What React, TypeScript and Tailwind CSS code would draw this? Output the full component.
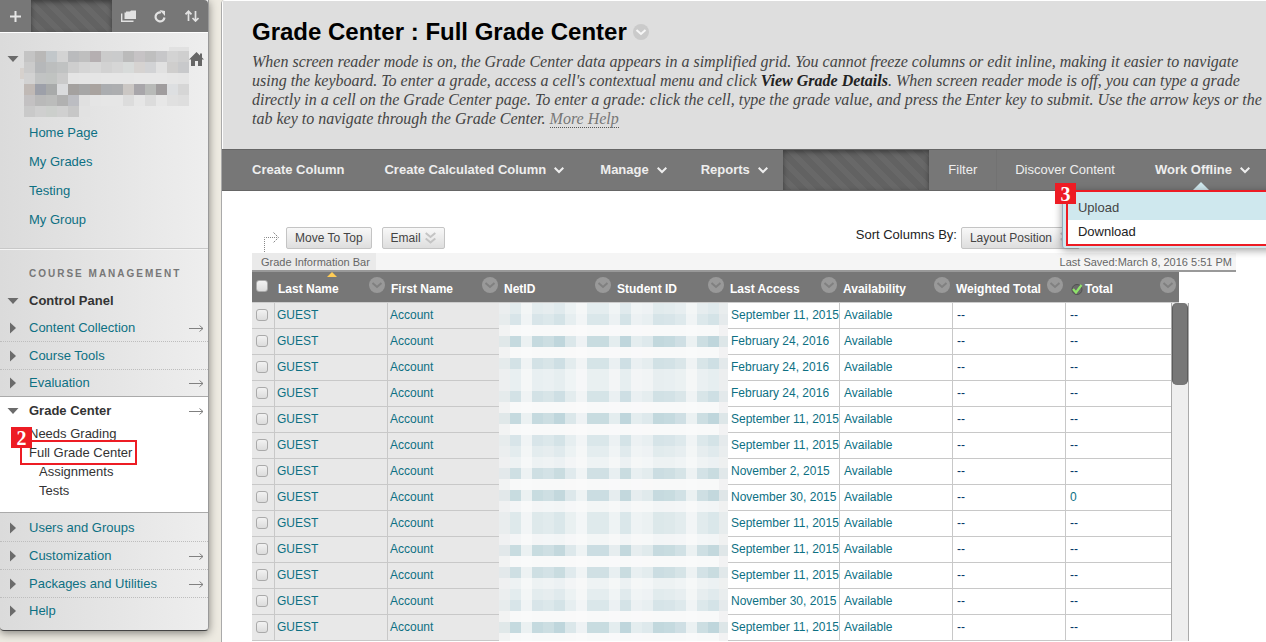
import React from 'react';

const links = ['Home Page', 'My Grades', 'Testing', 'My Group'];

const toolsTop = [
  { name: 'Content Collection', arrow: true },
  { name: 'Course Tools', arrow: false },
  { name: 'Evaluation', arrow: true },
];

const toolsBottom = [
  { name: 'Users and Groups', arrow: false },
  { name: 'Customization', arrow: true },
  { name: 'Packages and Utilities', arrow: true },
  { name: 'Help', arrow: false },
];

const columns = ['Last Name', 'First Name', 'NetID', 'Student ID', 'Last Access', 'Availability', 'Weighted Total', 'Total'];

const rows = [
  { date: 'September 11, 2015', total: '--' },
  { date: 'February 24, 2016', total: '--' },
  { date: 'February 24, 2016', total: '--' },
  { date: 'February 24, 2016', total: '--' },
  { date: 'September 11, 2015', total: '--' },
  { date: 'September 11, 2015', total: '--' },
  { date: 'November 2, 2015', total: '--' },
  { date: 'November 30, 2015', total: '0' },
  { date: 'September 11, 2015', total: '--' },
  { date: 'September 11, 2015', total: '--' },
  { date: 'September 11, 2015', total: '--' },
  { date: 'November 30, 2015', total: '--' },
  { date: 'September 11, 2015', total: '--' },
];

// censored course name
const courseMask = [
  'c4c4c4 b9b8b7 c2c7ca d3d3d3 babbbd bfbfbf b5afb1 cbcbcb cacbcc bbbbbb c6c3c5 bfbfbf c7c7c9 d3d3d3 cfcfcf',
  'cbcbcb b6b8ba bcbebe c0c2c2 cecece d5d5d5 d8d8d8 d2d2d2 d6d6d6 d8dbda d6d3d1 d2d3d5 e1e1e1 cfcecd c8c9cb',
  'd2d2d2 c1c3c3 c0c3c1 cacaca e4e4e4 e5e5e5 e5e5e5 e6e6e6 e6e6e6 e6e6e6 e7e7e7 e7e7e7 e7e7e7 e6e6e6 e5e5e5',
  'c0b9b5 9da0a9 a8aaaa dadbdd a4a19f a6a6a6 a9a39f abadb0 adaeb0 cbc7c4 a8a6aa b8bab8 a09d9e dddfe1 d6d6d6',
  'c3c1c2 b9b9b9 bbbcbb b1b1b1 bcbdc2 e0e0e0 e5e5e5 e6e6e6 e6e6e6 dcdcdc e6e6e6 dcdcdc e7e7e7 e0e0e0 dedede',
  'c9c9c9 cfcfcf cccfcc d0d0d0 c7c7c7 e2e2e2',
];

const idMask = [0.3, 0.85, 0.25, 0.85, 0.75, 0.95, 0.5, 0.2, 0.8, 0.8, 0.35, 0.95, 0.35, 0.45, 0.9, 0.85, 0.7, 0.25, 0.75, 0.95, 0.35];

const idMaskColor = (x: number, y: number) => {
  const top = y * 11;
  let covered = 0.4;
  for (let k = 0; k < 13; k++) {
    covered += Math.max(0, Math.min(top + 11, 17 + 26 * k) - Math.max(top, 7 + 26 * k));
  }
  const a = idMask[x] * Math.min(1, covered / 10);
  const base = x === 0 || x === 20 ? 243 : 250;
  return `rgb(${Math.round(base - 62 * a)}, ${Math.round(base - 38 * a)}, ${Math.round(base - 32 * a)})`;
};

const stripes = 'bg-[repeating-linear-gradient(45deg,#626262_0px,#626262_6px,#686868_6px,#686868_12px)] shadow-[inset_0_2px_5px_rgba(0,0,0,0.4)]';

const Caret = ({ open }: { open?: boolean }) => (
  <svg className="w-3 h-3 shrink-0" viewBox="0 0 12 12" fill="#6b6b6b">
    <path d={open ? 'M0.5 3h11L6 9z' : 'M3 0.5v11L9 6z'} />
  </svg>
);

const LongArrow = () => (
  <svg className="w-4 h-2 shrink-0" viewBox="0 0 16 8" fill="none" stroke="#808080">
    <path d="M1 4.5h14M11.5 1.5l3.5 3-3.5 3" />
  </svg>
);

const Chevron = () => (
  <svg className="w-[10px] h-2" viewBox="0 0 10 8" fill="none" stroke="#eee" strokeWidth="2">
    <path d="M0.7 1.7L5 6l4.3-4.3" />
  </svg>
);

const RoundChevron = ({ light }: { light?: boolean }) => (
  <svg className="w-4 h-4 block" viewBox="0 0 16 16" fill="none">
    <circle cx="8" cy="8" r="8" fill={light ? '#cacaca' : '#999'} />
    <path d="M3.5 6L8 10l4.5-4" stroke={light ? '#f6f6f6' : '#808080'} strokeWidth="2" />
  </svg>
);

const DoubleChevron = () => (
  <svg className="w-[11px] h-3" viewBox="0 0 11 12" fill="none" stroke="#c4c4c4" strokeWidth="2">
    <path d="M0.7 1l4.8 4 4.8-4M0.7 6.5l4.8 4 4.8-4" />
  </svg>
);

const Badge = ({ text }: { text: string }) => (
  <span className="flex items-center justify-center w-[21px] h-[21px] bg-[#ed1c24] text-white font-bold text-[20px] leading-none font-['Liberation_Serif',serif]">
    {text}
  </span>
);

const Tool = ({ name, arrow, last }: { name: string; arrow: boolean; last?: boolean }) => (
  <li className={`flex items-center pl-[7px] pr-1 ${last ? 'h-[26px]' : 'h-7 border-b border-dotted border-[#bdbdbd]'}`}>
    <Caret />
    <a href="#" className="flex-1 ml-[10px] text-[#0d7083]">{name}</a>
    {arrow && <LongArrow />}
  </li>
);

const Sidebar = () => (
  <aside className="w-[209px] shrink-0 self-start border-r border-b border-r-[#999] border-b-[#444] rounded-b-[4px] shadow-[0_2px_8px_rgba(0,0,0,0.45)] bg-linear-to-r from-[#dbdbdb] to-[#eee] text-[13px]">
    <div className="flex h-8 bg-[#777] rounded-tr-[4px]">
      <button aria-label="Add" className="w-[31px] flex items-center justify-center">
        <svg className="w-[11px] h-[11px]" viewBox="0 0 11 11" fill="#e6e6e6"><path d="M4.500 0h2v4.500H11v2H6.500V11h-2V6.500H0v-2h4.500z" /></svg>
      </button>
      <div className={`w-[81px] ${stripes}`}></div>
      <button aria-label="Course files" className="w-8 flex items-center justify-center">
        <svg className="w-[15px] h-3" viewBox="0 0 15 12">
          <path d="M3.500 2.500h1.500v-1h4L10 0.500h5v8.500H3.500z" fill="#e2e2e2" />
          <path d="M0.700 3.500v7.800h11.800" fill="none" stroke="#e2e2e2" strokeWidth="1.400" />
        </svg>
      </button>
      <button aria-label="Refresh" className="w-8 flex items-center justify-center">
        <svg className="w-3 h-[13px]" viewBox="0 0 12 13">
          <path d="M10.500 7.500a4.500 4.500 0 1 1-3.500-5" fill="none" stroke="#e2e2e2" strokeWidth="2.200" />
          <path d="M5.500 0l5.500 1v5z" fill="#e2e2e2" />
        </svg>
      </button>
      <button aria-label="Reorder" className="flex-1 flex items-center justify-center">
        <svg className="w-[14px] h-3" viewBox="0 0 14 12" fill="none" stroke="#e2e2e2" strokeWidth="1.700">
          <path d="M3.500 11V1.500M0.500 4.300l3-3 3 3M10.500 1v10M7.500 8l3 3 3-3" />
        </svg>
      </button>
    </div>
    <div className="border-t border-white h-[86px] flex pl-[7px] pt-[14px]">
      <div className="pt-[6px]"><Caret open /></div>
      <svg className="w-[170px] h-[70px] shrink-0" viewBox="-5 0 170 70" shapeRendering="crispEdges">
        <rect x="145" y="0" width="20" height="4" fill="#e1e1e1" />
        <rect x="-4" y="21" width="4" height="11" fill="#d6d1cd" />
        {courseMask.map((line, y) =>
          line.split(' ').map((c, x) => (
            <rect key={`${y}-${x}`} x={x * 11} y={4 + y * 11} width="11" height="11" fill={`#${c}`} />
          ))
        )}
      </svg>
      <a href="#" aria-label="Home" className="pt-[5px]">
        <svg className="w-[15px] h-[14px]" viewBox="0 0 15 14" fill="#666">
          <path d="M7.500 0L11 3.500V1.500h2v4L15 7.500h-2V14H9V9H6v5H2V7.500H0z" />
        </svg>
      </a>
    </div>
    <ul className="pl-[29px] pb-[14px] border-b border-[#c8c8c8]">
      {links.map((l) => (
        <li key={l} className="h-[29px] leading-[29px]"><a href="#" className="text-[#0d7083]">{l}</a></li>
      ))}
    </ul>
    <div className="border-t border-[#f4f4f4]">
      <h3 className="pl-[29px] pt-[14px] h-[38px] leading-5 text-[10px] font-bold tracking-[2px] text-[#777]">COURSE MANAGEMENT</h3>
      <div className="flex items-center h-[26px] pl-[7px] font-bold text-[#333]">
        <Caret open /><span className="ml-[10px]">Control Panel</span>
      </div>
    </div>
    <ul>
      {toolsTop.map((t, i) => <Tool key={t.name} {...t} last={i === toolsTop.length - 1} />)}
    </ul>
    <div className="bg-white border-y border-[#aaa] pb-3 text-[#333]">
      <div className="flex items-center h-[27px] pl-[7px] pr-1 font-bold">
        <Caret open /><span className="flex-1 ml-[10px]">Grade Center</span><LongArrow />
      </div>
      <ul className="pl-[29px] leading-[19px]">
        <li><a href="#">Needs Grading</a></li>
        <li className="relative">
          <a href="#">Full Grade Center</a>
          <span className="absolute left-[-9px] top-[-3px] w-[117px] h-[25px] border-2 border-[#ed1c24]"></span>
          <span className="absolute left-[-18px] top-[-16px]"><Badge text="2" /></span>
        </li>
        <li className="pl-[10px]"><a href="#">Assignments</a></li>
        <li className="pl-[10px]"><a href="#">Tests</a></li>
      </ul>
    </div>
    <ul className="pt-px pb-[6px]">
      {toolsBottom.map((t, i) => <Tool key={t.name} {...t} last={i === toolsBottom.length - 1} />)}
    </ul>
  </aside>
);

const ActionBar = () => (
  <nav className="flex h-[42px] bg-[#777] border-y border-[#666] text-[13px] text-[#eee] [text-shadow:0_-1px_0_#222] whitespace-nowrap">
    <button className="pl-[30px] pr-[22px] font-bold">Create Column</button>
    <button className="pl-[18px] pr-5 font-bold flex items-center gap-2">Create Calculated Column <Chevron /></button>
    <button className="px-4 font-bold flex items-center gap-2">Manage <Chevron /></button>
    <button className="pl-[18px] pr-[15px] font-bold flex items-center gap-2">Reports <Chevron /></button>
    <div className={`flex-1 ${stripes}`}></div>
    <button className="px-[19px] border-r border-[#727272]">Filter</button>
    <button className="pl-[18px] pr-5">Discover Content</button>
    <div className="relative flex">
      <button className="pl-5 pr-4 font-bold flex items-center gap-2">Work Offline <Chevron /></button>
      <span className="absolute bottom-0 left-[58px] border-x-8 border-b-8 border-x-transparent border-b-[#cfe8ee]"></span>
      <div className="absolute z-10 top-full left-[-73px] -right-4 pl-[3px] pb-[2px] bg-[#cfe8ee] rounded-bl-[3px] border-l border-[#9ab] shadow-[0_2px_8px_rgba(0,0,0,0.4)] [text-shadow:none]">
        <ul className="border-2 border-[#ed1c24] bg-white text-[#222]">
          <li className="h-7 px-[10px] pt-1 flex items-center bg-[#cfe8ee] text-[#444]"><a href="#">Upload</a></li>
          <li className="h-6 px-[10px] flex items-center"><a href="#">Download</a></li>
        </ul>
        <span className="absolute left-[-8px] top-[-7px]"><Badge text="3" /></span>
      </div>
    </div>
  </nav>
);

const Check = ({ label }: { label: string }) => (
  <input type="checkbox" aria-label={label} className="appearance-none block w-3 h-3 border border-[#aaa] rounded-[3px] bg-linear-to-b from-[#f2f2f2] to-[#dcdcdc]" />
);

const grayButton = 'h-[22px] px-2 flex items-center text-[12px] text-[#444] border border-[#c4c4c4] rounded-[2px] bg-linear-to-b from-[#f8f8f8] to-[#dedede] whitespace-nowrap';

const GradeTable = () => (
  <div className="relative w-[937px]">
    <table className="table-fixed w-[927px] border-separate border-spacing-0 text-[12px] text-left whitespace-nowrap">
      <colgroup>
        <col className="w-[23px]" />
        {columns.map((c) => <col key={c} className="w-[113px]" />)}
      </colgroup>
      <thead>
        <tr className="h-[31px] bg-[#777] text-white">
          <th className="border-b border-[#ccc] p-0 pl-1 pb-[3px]"><Check label="Select all" /></th>
          {columns.map((c, i) => (
            <th key={c} className="relative border-b border-[#ccc] p-0 pl-[3px]">
              {i === 0 && <span className="absolute top-0 left-[52px] border-x-[5px] border-b-[5px] border-x-transparent border-b-[#fc5]"></span>}
              <div className="flex items-center justify-between pr-[3px]">
                <span className="flex items-center pt-[3px]">
                  {c === 'Total' && (
                    <svg className="w-3 h-3 ml-[2px] mr-[2px]" viewBox="0 0 12 12">
                      <circle cx="6" cy="6.500" r="5" fill="#6a6a6a" stroke="#505050" />
                      <path d="M2 6l3 3.500L10.500 2" fill="none" stroke="#8fe36a" strokeWidth="2.200" />
                    </svg>
                  )}
                  {c}
                </span>
                <button aria-label={`${c} options`} className="pb-1"><RoundChevron /></button>
              </div>
            </th>
          ))}
        </tr>
      </thead>
      <tbody className="text-[#0d7083] [&_td]:h-[26px] [&_td]:border-b [&_td]:border-r [&_td]:border-[#c8c8c8] [&_td]:p-0 [&_td]:pl-[2px] [&_td]:pb-[2px] [&_td]:overflow-hidden">
        {rows.map((r, i) => (
          <tr key={i}>
            <td className="bg-[#e8e8e8]"><div className="pl-[2px]"><Check label={`Select row ${i + 1}`} /></div></td>
            <td className="bg-[#e8e8e8]"><a href="#">GUEST</a></td>
            <td className="bg-[#e8e8e8]"><a href="#">Account</a></td>
            <td></td>
            <td></td>
            <td><div className="pl-[2px] overflow-hidden">{r.date}</div></td>
            <td><div className="pl-[2px]">Available</div></td>
            <td className="text-[#036]"><div className="pl-[2px]">--</div></td>
            <td className={r.total === '0' ? '' : 'text-[#036]'}><div className="pl-[2px]">{r.total}</div></td>
          </tr>
        ))}
      </tbody>
    </table>
    <svg className="absolute left-[247px] top-[31px] w-[229px] h-[338px]" viewBox="0 0 229 338" shapeRendering="crispEdges">
      {Array.from({ length: 31 }, (_, y) =>
        idMask.map((_, x) => <rect key={`${y}-${x}`} x={x * 11} y={y * 11} width="11" height="11" fill={idMaskColor(x, y)} />)
      )}
    </svg>
    <div className="absolute right-0 top-[31px] bottom-0 w-[18px] bg-[#eee] border-x border-[#aaa]">
      <div className="h-[82px] bg-[#777] border-x border-[#5c5c5c] rounded-[5px]"></div>
    </div>
  </div>
);

const App = () => {
  return (
    <div className="flex h-screen overflow-hidden gap-3 bg-[#edeae1] font-['Liberation_Sans',Arial,sans-serif]">
      <Sidebar />
      <main className="flex-1 min-w-0 bg-white border-l border-[#aaa] rounded-tl-[4px] overflow-hidden">
        <header className="min-h-[149px] bg-[#dedede] border-t border-l border-white pl-[29px] pt-4">
          <div className="flex items-center gap-[6px]">
            <h1 className="text-[24px] leading-[30px] font-bold text-black">Grade Center : Full Grade Center</h1>
            <button aria-label="Page options"><RoundChevron light /></button>
          </div>
          <p className="mt-[5px] text-[16px] leading-[19px] italic text-[#444] font-['Georgia','Liberation_Serif',serif]">
            When screen reader mode is on, the Grade Center data appears in a simplified grid. You cannot freeze columns or edit inline, making it easier to navigate<br />
            using the keyboard. To enter a grade, access a cell's contextual menu and click <b className="text-[#222]">View Grade Details</b>. When screen reader mode is off, you can type a grade<br />
            directly in a cell on the Grade Center page. To enter a grade: click the cell, type the grade value, and press the Enter key to submit. Use the arrow keys or the<br />
            tab key to navigate through the Grade Center. <a href="#" className="text-[#777] border-b border-dotted border-[#555]">More Help</a>
          </p>
        </header>
        <ActionBar />
        <section className="pl-[30px] pr-[30px] pt-9">
          <div className="flex items-start h-[26px]">
            <svg className="w-[22px] h-[26px] ml-3" viewBox="0 0 22 26" fill="none" stroke="#888">
              <path d="M0.500 25V10.500H13" strokeDasharray="1 1" />
              <path d="M9.500 5.500l5 5-5 5" strokeDasharray="2 1" />
            </svg>
            <button className={grayButton}>Move To Top</button>
            <button className={`${grayButton} gap-1 ml-[10px]`}>Email <DoubleChevron /></button>
            <span className="ml-auto mr-1 text-[13px] leading-4 text-[#222]">Sort Columns By:</span>
            <button className={`${grayButton} gap-2 mr-[156px]`}>Layout Position <DoubleChevron /></button>
          </div>
          <div className="flex justify-between h-[19px] leading-[18px] bg-[#f5f5f5] border-b-2 border-[#999] text-[11px] text-[#666]">
            <span className="bg-[#eaeaea] pl-[9px] pr-[6px]">Grade Information Bar</span>
            <span className="pr-1">Last Saved:March 8, 2016 5:51 PM</span>
          </div>
          <GradeTable />
        </section>
      </main>
    </div>
  );
};

export default App;
